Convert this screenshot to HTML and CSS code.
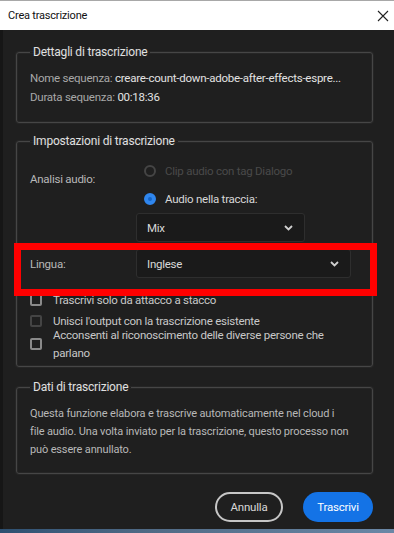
FILE: index.html
```html
<!DOCTYPE html>
<html lang="it">
<head>
<meta charset="utf-8">
<title>Crea trascrizione</title>
<link rel="stylesheet" href="styles.css">
</head>
<body>
<div class="window">
<div class="titlebar">
<span class="title">Crea trascrizione</span>
<svg class="close" width="12" height="12" viewBox="0 0 12 12"><path d="M1 1L11 11M11 1L1 11" stroke="#222" stroke-width="1.1" fill="none"/></svg>
</div>

<div class="dialog">
<fieldset class="group group-details">
<legend>Dettagli di trascrizione</legend>
<div class="info"><span class="key">Nome sequenza:</span> <span class="val">creare-count-down-adobe-after-effects-espre...</span></div>
<div class="info"><span class="key">Durata sequenza:</span> <span class="val">00:18:36</span></div>
</fieldset>

<fieldset class="group group-settings">
<legend>Impostazioni di trascrizione</legend>
<div class="row">
<div class="label label-audio">Analisi audio:</div>
<div class="controls">
<div class="radio disabled"><span class="dot"></span>Clip audio con tag Dialogo</div>
<div class="radio checked"><span class="dot"></span>Audio nella traccia:</div>
<div class="select select-mix"><span>Mix</span><svg width="9" height="6" viewBox="0 0 9 6"><path d="M1 1L4.5 4.5L8 1" stroke="#d0d0d0" stroke-width="1.8" fill="none"/></svg></div>
</div>
</div>
<div class="row row-lang">
<div class="label">Lingua:</div>
<div class="select select-lang"><span>Inglese</span><svg width="9" height="6" viewBox="0 0 9 6"><path d="M1 1L4.5 4.5L8 1" stroke="#d0d0d0" stroke-width="1.8" fill="none"/></svg></div>
</div>
<div class="checks">
<div class="check"><span class="box"></span><span>Trascrivi solo da attacco a stacco</span></div>
<div class="check check-merge disabled"><span class="box"></span><span>Unisci l'output con la trascrizione esistente</span></div>
<div class="check check-multi"><span class="box"></span><span>Acconsenti al riconoscimento delle diverse persone che<br>parlano</span></div>
</div>
</fieldset>

<fieldset class="group group-data">
<legend>Dati di trascrizione</legend>
<p class="note">Questa funzione elabora e trascrive automaticamente nel cloud i<br>file audio. Una volta inviato per la trascrizione, questo processo non<br>può essere annullato.</p>
</fieldset>

<div class="buttons">
<button type="button" class="btn btn-cancel">Annulla</button>
<button type="button" class="btn btn-primary">Trascrivi</button>
</div>
</div>

<div class="highlight"></div>
<div class="taskbar"></div>
</div>
</body>
</html>
```

FILE: styles.css
```css
html, body {
  margin: 0;
  padding: 0;
}
body {
  width: 394px;
  height: 533px;
  overflow: hidden;
  background: #1e1e1e;
  font-family: Roboto, "Liberation Sans", sans-serif;
}
.window {
  position: relative;
  width: 394px;
  height: 533px;
  background: #1f1f1f;
  border-left: 3px solid #161616;
  box-sizing: border-box;
}
.titlebar {
  height: 30px;
  box-sizing: border-box;
  border-top: 1px solid #a8a8a8;
  margin-left: -3px;
  background: #fff;
  display: flex;
  align-items: center;
  justify-content: space-between;
  padding: 0 5px 0 8px;
}
.title {
  font-size: 11px;
  color: #111;
  letter-spacing: -0.2px;
}
.dialog {
  padding: 14px 21px 0 13px;
}
.group {
  margin: 0;
  border: 1px solid #464646;
  border-radius: 3px;
  box-shadow: 0 0 0 1px #262626, inset 0 0 0 1px #262626;
  padding: 0 13px;
  color: #b4b4b4;
  font-size: 11.5px;
  letter-spacing: -0.25px;
}
.group legend {
  padding: 0 3px;
  font-size: 12px;
  line-height: 16px;
  color: #e0e0e0;
  letter-spacing: -0.2px;
}
.group-details {
  padding-top: 9px;
  padding-bottom: 15px;
}
.info {
  line-height: 19px;
  white-space: nowrap;
}
.info .key {
  color: #a8a8a8;
}
.info .val {
  color: #e2e2e2;
}
.group-settings {
  margin-top: 10px;
  padding-top: 8px;
  padding-bottom: 4px;
}
.row {
  display: flex;
}
.label {
  width: 106px;
  flex: none;
  color: #b8b8b8;
  line-height: 16px;
}
.label-audio {
  padding-top: 14px;
}
.controls {
  display: flex;
  flex-direction: column;
}
.radio {
  height: 28px;
  display: flex;
  align-items: center;
  padding-left: 8px;
  color: #d8d8d8;
}
.radio .dot {
  width: 12px;
  height: 12px;
  box-sizing: border-box;
  border-radius: 50%;
  margin-right: 9px;
}
.radio.disabled {
  color: #4a4a4a;
}
.radio.disabled .dot {
  border: 2px solid #454545;
}
.radio.checked .dot {
  border: 4px solid #2f86ee;
  background: #1464c8;
}
.select {
  height: 29px;
  box-sizing: border-box;
  border: 1px solid #2e2e2e;
  border-radius: 3px;
  background: #1a1a1a;
  display: flex;
  align-items: center;
  justify-content: space-between;
  padding: 0 11px 0 10px;
  color: #d8d8d8;
}
.select-mix {
  width: 169px;
}
.select-lang {
  width: 215px;
}
.row-lang {
  margin-top: 7px;
  align-items: center;
}
.checks {
  margin-top: 11px;
}
.check {
  display: flex;
  align-items: center;
  height: 22px;
  color: #c8c8c8;
}
.check .box {
  width: 12px;
  height: 12px;
  box-sizing: border-box;
  border: 2px solid #8a8a8a;
  border-radius: 2px;
  margin-right: 11px;
  flex: none;
}
.check.disabled .box {
  border-color: #444;
}
.check-merge {
  height: 20px;
}
.check-multi {
  height: auto;
  margin-top: -5px;
  line-height: 18px;
}
.group-data {
  margin-top: 12px;
  padding-top: 10px;
  padding-bottom: 14px;
}
.note {
  margin: 0;
  font-size: 11px;
  line-height: 18px;
  letter-spacing: -0.15px;
  color: #b8b8b8;
  white-space: nowrap;
}
.buttons {
  display: flex;
  justify-content: flex-end;
  gap: 20px;
  margin-top: 18px;
  padding-right: 0;
}
.btn {
  height: 30px;
  border-radius: 15px;
  font-family: Roboto, "Liberation Sans", sans-serif;
  font-size: 11.5px;
  letter-spacing: -0.2px;
  padding: 0;
}
.btn-cancel {
  width: 68px;
  border: 2px solid #c6c6c6;
  background: transparent;
  color: #d8d8d8;
}
.btn-primary {
  width: 70px;
  border: none;
  background: #1473e6;
  color: #fff;
}
.highlight {
  position: absolute;
  left: 11px;
  top: 243px;
  width: 363px;
  height: 53px;
  box-sizing: border-box;
  border: 7px solid #ff0000;
}
.taskbar {
  position: absolute;
  left: -3px;
  right: 0;
  bottom: 0;
  height: 4px;
  background: linear-gradient(to right, #2d4f70 0, #3a5a7a 48px, #506a85 150px, #6a87a6 100%);
}
```
